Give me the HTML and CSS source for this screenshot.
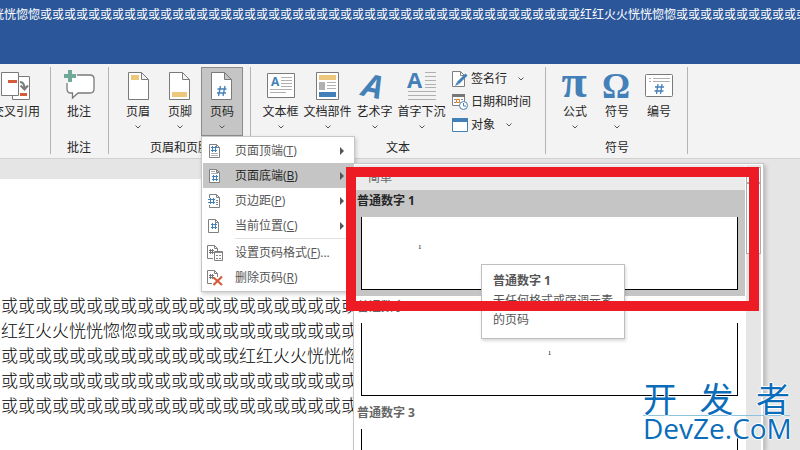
FILE: index.html
```html
<!DOCTYPE html>
<html lang="zh-CN">
<head>
<meta charset="utf-8">
<title>文档</title>
<link rel="stylesheet" href="styles.css">
</head>
<body>
<header class="titlebar"><span class="doc-title">恍恍惚惚或或或或或或或或或或或或或或或或或或或或或或或或或或或或或或或或或或或或或或或或或或或或或红红火火恍恍惚惚或或或或或或或或或或或</span></header>

<nav class="ribbon">
  <section class="group group-ref">
    <div class="tools">
      <button class="tool"><svg class="icon" viewBox="0 0 32 32"><path d="M12.500 6.500h17v23h-17z" fill="#fff" stroke="#7a7a7a"/><path d="M1.500 2.500h17v23h-17z" fill="#fff" stroke="#7a7a7a"/><path d="M8 10h9v3H8zM20 23h7v3h-7z" fill="#d55b3a"/><path d="M20 12c3 0 4.500 2 4.500 7M20.500 15.500l4 4 3.500-4" fill="none" stroke="#7a7a7a" stroke-width="2"/></svg><span>交叉引用</span></button>
    </div>
  </section>

  <section class="group group-comment">
    <div class="tools">
      <button class="tool"><svg class="icon" viewBox="0 0 32 32"><path d="M5 5h22q4 0 4 4v10q0 4-4 4H15l-5.500 5v-5H8q-4 0-4-4V7z" fill="#fff" stroke="#7a7a7a" stroke-width="1.300"/><path d="M1 0h13v13H1z" fill="#f3f3f3"/><path d="M6 8h8v5H6z" fill="#fff"/><path d="M5 0h4v4h4v4H9v4H5V8H1V4h4z" fill="#71a898"/></svg><span>批注</span></button>
    </div>
    <p class="group-name">批注</p>
  </section>

  <section class="group group-hf">
    <div class="tools">
      <button class="tool"><svg class="icon" viewBox="0 0 32 32"><path d="M6.500 2.500h13l7 7v20h-20zM19.500 2.500v7h7" fill="#fff" stroke="#7a7a7a"/><path d="M9 5h8v5H9z" fill="#edc77b"/></svg><span>页眉</span><svg class="chevron" viewBox="0 0 6 4"><path d="M.5.5L3 3 5.500.5" /></svg></button>
      <button class="tool"><svg class="icon" viewBox="0 0 32 32"><path d="M5.500 2.500h13l7 7v20h-20zM18.500 2.500v7h7" fill="#fff" stroke="#7a7a7a"/><path d="M8 22h15v5H8z" fill="#edc77b"/></svg><span>页脚</span><svg class="chevron" viewBox="0 0 6 4"><path d="M.5.5L3 3 5.500.5" /></svg></button>
      <div class="dropdown">
        <button class="tool pressed"><svg class="icon" viewBox="0 0 32 32"><path d="M5.500 2.500h13l7 7v20h-20zM18.500 2.500v7h7" fill="#fff" stroke="#7a7a7a"/><path d="M14.500 16l-2 10M19 16l-2 10M11.500 19h9M11 23h9" fill="none" stroke="#4480b8" stroke-width="1.300"/></svg><span>页码</span><svg class="chevron" viewBox="0 0 6 4"><path d="M.5.5L3 3 5.500.5" /></svg></button>
        <ul class="menu">
          <li><button class="menu-item"><svg class="mini" viewBox="0 0 16 16"><path d="M2.500 1.500h7l3 3v10h-10zM9.500 1.500v3h3" class="sheet"/><path d="M5.500 3v6M8.500 3v6M4 4.500h6M4 7.500h6" class="hash"/><path d="M4 10.500h7M4 12.500h7" class="rule light"/></svg><span>页面顶端(<u>T</u>)</span><i class="arrow"></i></button></li>
          <li class="open"><button class="menu-item"><svg class="mini" viewBox="0 0 16 16"><path d="M2.500 1.500h7l3 3v10h-10zM9.500 1.500v3h3" class="sheet"/><path d="M6.500 7v6M9.500 7v6M5 8.500h6M5 11.500h6" class="hash"/><path d="M4 3.500h4M4 5.500h7" class="rule light"/></svg><span>页面底端(<u>B</u>)</span><i class="arrow"></i></button>
            <div class="gallery">
              <div class="gallery-list">
                <h2 class="gallery-head">简单</h2>
                <button class="style selected"><span class="style-name">普通数字 1</span><span class="preview at-left">1</span></button>
                <button class="style"><span class="style-name">普通数字 2</span><span class="preview at-center">1</span></button>
                <button class="style"><span class="style-name">普通数字 3</span><span class="preview"></span></button>
              </div>
              <div class="scroll"><span class="scroll-up"></span><span class="scroll-thumb"></span></div>
            </div>
          </li>
          <li><button class="menu-item"><svg class="mini" viewBox="0 0 16 16"><path d="M2.500 1.500h7l3 3v10h-10zM9.500 1.500v3h3" class="sheet"/><path d="M1 5h6v7H1z" fill="#fff"/><path d="M3.500 5v6M6.500 5v6M1 6.500h7M1 9.500h7" class="hash"/><path d="M9 7.500h2M9 9.500h2M9 11.500h2" class="rule"/></svg><span>页边距(<u>P</u>)</span><i class="arrow"></i></button></li>
          <li><button class="menu-item"><svg class="mini" viewBox="0 0 16 16"><path d="M1.500 1.500h7l3 3v10h-10zM8.500 1.500v3h3" class="sheet"/><path d="M5.500 5v6M8.500 5v6M4 6.500h6M4 9.500h6" class="hash"/></svg><span>当前位置(<u>C</u>)</span><i class="arrow"></i></button></li>
          <li class="divided"><button class="menu-item"><svg class="mini" viewBox="0 0 16 16"><path d="M6 13.500H.5v-13h7l3 3V6M7.500.5v3h3" class="sheet"/><path d="M3.500 4v5M5.500 4v5M2 5.500h5M2 7.500h5" class="hash dark"/><path d="M7.500 6.500h8v9h-8z" class="sheet"/><path d="M8 7.500h7" class="rule"/><path d="M9 10.500h2M12 10.500h2M9 13.500h2M12 13.500h2" class="rule"/></svg><span>设置页码格式(<u>F</u>)...</span></button></li>
          <li><button class="menu-item"><svg class="mini" viewBox="0 0 16 16"><path d="M5 13.500H.5v-13h7l3 3V7M7.500.5v3h3" class="sheet"/><path d="M3.500 4v5M5.500 4v5M2 5.500h5M2 7.500h5" class="hash dark"/><path d="M6.500 7.500l8.500 7.500M15 6.500L6.500 15" stroke="#d55b3a" stroke-width="2.200"/></svg><span>删除页码(<u>R</u>)</span></button></li>
        </ul>
      </div>
    </div>
    <p class="group-name">页眉和页脚</p>
  </section>

  <section class="group group-text">
    <div class="tools">
      <button class="tool"><svg class="icon" viewBox="0 0 32 32"><path d="M2.500 3.500h27v24h-27z" fill="#fff" stroke="#7a7a7a"/><text x="6" y="16" class="glyph" font-size="12">A</text><path d="M16 7.500h11M16 10.500h11M16 13.500h11M16 16.500h11M5 19.500h22M5 22.500h16" class="rule light"/></svg><span>文本框</span><svg class="chevron" viewBox="0 0 6 4"><path d="M.5.5L3 3 5.500.5" /></svg></button>
      <button class="tool"><svg class="icon" viewBox="0 0 32 32"><path d="M4.500 2.500h22v27h-22z" fill="#fff" stroke="#7a7a7a"/><path d="M7 5h17v5H7z" fill="#edc77b"/><path d="M7 12h6v8H7z" fill="#b0b0b0"/><path d="M15 12.500h9M15 15.500h9M15 18.500h9" class="rule light"/><path d="M7 22h17v5H7z" fill="#4480b8"/></svg><span>文档部件</span><svg class="chevron" viewBox="0 0 6 4"><path d="M.5.5L3 3 5.500.5" /></svg></button>
      <button class="tool"><svg class="icon" viewBox="0 0 32 32"><text x="4" y="28" class="glyph" font-size="32" font-style="italic" transform="rotate(12 16 16)">A</text></svg><span>艺术字</span><svg class="chevron" viewBox="0 0 6 4"><path d="M.5.5L3 3 5.500.5" /></svg></button>
      <button class="tool"><svg class="icon" viewBox="0 0 32 32"><text x="1" y="18" class="glyph" font-size="22">A</text><path d="M19 2.500h11M19 6.500h11M19 10.500h11M19 14.500h11M19 17.500h11M2 21.500h28M2 25.500h28M2 29.500h28" class="rule light"/></svg><span>首字下沉</span><svg class="chevron" viewBox="0 0 6 4"><path d="M.5.5L3 3 5.500.5" /></svg></button>
      <div class="stack">
        <button class="row-tool"><svg class="mini" viewBox="0 0 16 16"><path d="M.5.5h8l4 4v11H.5zM8.500.5v4h4" class="sheet"/><path d="M6 12l8.500-8.500" stroke="#4480b8" stroke-width="3"/><path d="M3 15l2-4 2 2z" fill="#4480b8"/></svg><span>签名行</span><svg class="chevron" viewBox="0 0 6 4"><path d="M.5.5L3 3 5.500.5" /></svg></button>
        <button class="row-tool"><svg class="mini" viewBox="0 0 16 16"><path d="M.5.5h12v11H.5z" class="sheet"/><path d="M0 0h13v3H0z" fill="#777"/><path d="M2 5.500h2M2 8.500h2M9 5.500h2" class="rule"/><path d="M4.500 5.500h3v3h-3z" fill="#fff" stroke="#e07b2a"/><circle cx="11.500" cy="11.500" r="4" fill="#fff" stroke="#4480b8"/><path d="M11.500 9v3h2.500" fill="none" stroke="#4480b8"/></svg><span>日期和时间</span></button>
        <button class="row-tool"><svg class="mini" viewBox="0 0 16 16"><path d="M.5 1.500h15v13H.5z" fill="#fff" stroke="#4480b8"/><path d="M0 1h16v4H0z" fill="#4480b8"/></svg><span>对象</span><svg class="chevron" viewBox="0 0 6 4"><path d="M.5.5L3 3 5.500.5" /></svg></button>
      </div>
    </div>
    <p class="group-name">文本</p>
  </section>

  <section class="group group-symbol">
    <div class="tools">
      <button class="tool"><svg class="icon" viewBox="0 0 32 32"><text x="15" y="27" class="serif" font-size="46" text-anchor="middle">π</text></svg><span>公式</span><svg class="chevron" viewBox="0 0 6 4"><path d="M.5.5L3 3 5.500.5" /></svg></button>
      <button class="tool"><svg class="icon" viewBox="0 0 32 32"><text x="15" y="28" class="serif" font-size="35" text-anchor="middle">Ω</text></svg><span>符号</span><svg class="chevron" viewBox="0 0 6 4"><path d="M.5.5L3 3 5.500.5" /></svg></button>
      <button class="tool"><svg class="icon" viewBox="0 0 32 32"><rect x="2.500" y="4.500" width="27" height="22" rx="1" fill="#fff" stroke="#7a7a7a"/><path d="M6 8.500h2M10 8.500h17M6 11.500h2M10 11.500h17" class="rule light"/><path d="M15 14l-1.500 10M19 14l-1.500 10M12 17h9M11.500 21h9" fill="none" stroke="#4480b8" stroke-width="1.300"/></svg><span>编号</span></button>
    </div>
    <p class="group-name">符号</p>
  </section>
</nav>

<main class="workspace">
  <article class="page">
    <p>或或或或或或或或或或或或或或或或或或或或或或</p>
    <p>红红火火恍恍惚惚或或或或或或或或或或或或或或</p>
    <p>或或或或或或或或或或或或或或红红火火恍恍惚惚</p>
    <p>或或或或或或或或或或或或或或或或或或或或或或</p>
    <p>或或或或或或或或或或或或或或或或或或或或或或</p>
  </article>
</main>

<aside class="tooltip" role="tooltip"><strong>普通数字 1</strong><p>无任何格式或强调元素的页码</p></aside>
<div class="highlight"></div>
<div class="watermark"><div class="mark-cn"><span>开</span><span>发</span><span>者</span></div><div class="mark-en">DevZe.CoM</div></div>
</body>
</html>
```

FILE: styles.css
```css
* { box-sizing: border-box; }

body {
  margin: 0;
  height: 100vh;
  overflow: hidden;
  position: relative;
  display: flex;
  flex-direction: column;
  background: #e5e5e5;
  color: #262626;
  font: 12px/16px "Open Sans", "Noto Sans CJK SC", sans-serif;
}

p, h2, ul { margin: 0; padding: 0; list-style: none; }

button {
  margin: 0;
  padding: 0;
  border: 0;
  background: none;
  color: inherit;
  font: inherit;
  white-space: nowrap;
}

svg { display: block; flex: none; overflow: visible; }

.titlebar {
  flex: none;
  height: 64px;
  padding-top: 7px;
  overflow: hidden;
  background: #2b579a;
  color: #fff;
}

.doc-title { display: block; margin-left: -8px; white-space: nowrap; }

/* Ribbon */
.ribbon {
  flex: none;
  display: flex;
  height: 95px;
  padding-top: 3px;
  background: #f3f3f3;
  border-bottom: 1px solid #d2d2d2;
}

.group {
  flex: none;
  height: 87px;
  border-right: 1px solid #b4b4b4;
}

.group-ref { margin-left: -8px; padding-right: 10px; }
.group-comment { padding: 0 8px 0 7px; }
.group-hf { padding: 0 7px 0 8px; }
.group-text .tools { padding: 0 14px 0 6px; }
.group-symbol { padding: 0 7px 0 8px; }

.tools { display: flex; height: 69px; }
.group-name { margin-top: 4px; text-align: center; }

.tool {
  display: flex;
  flex-direction: column;
  align-items: center;
  width: 42px;
  height: 69px;
  padding-top: 3px;
  line-height: 20px;
}

.group-ref .tool { width: 48px; }
.group-text .tool { width: 47px; }
.tool.pressed { background: #c5c5c5; outline: 1px solid #8c8c8c; outline-offset: -1px; }

.icon { width: 32px; height: 32px; }
.mini { width: 16px; height: 16px; }
.chevron { width: 6px; height: 4px; fill: none; stroke: #555; }
.tool .chevron { margin-top: 3px; }

.glyph { font-family: "Open Sans", sans-serif; font-weight: 700; fill: #4480b8; }
.serif { font-family: "Liberation Serif", serif; font-weight: 700; fill: #4480b8; }
.sheet { fill: #fff; stroke: #808080; }
.hash { fill: none; stroke: #4480b8; }
.hash.dark { stroke: #777; }
.rule { fill: none; stroke: #888; }
.rule.light { stroke: #b0b0b0; }

.stack { display: flex; flex-direction: column; margin-left: 7px; }
.row-tool { display: flex; align-items: center; gap: 3px; height: 23px; }
.row-tool .chevron { margin-left: 8px; }

/* Page-number menu */
.dropdown { position: relative; z-index: 2; }

.menu {
  position: absolute;
  top: 100%;
  left: 0;
  width: 154px;
  padding: 1px;
  background: #fff;
  border: 1px solid #c6c6c6;
  box-shadow: 1px 2px 4px rgba(0, 0, 0, .2);
  color: #555;
}

.menu li { position: relative; }

.menu-item {
  display: flex;
  align-items: center;
  width: 100%;
  height: 25px;
  padding: 0 9px 0 4px;
  text-align: left;
}

.menu-item span { flex: 1; margin-left: 12px; }
.menu .open { background: #c5c5c5; color: #262626; }
.menu .divided { padding-top: 2px; }

.divided::before {
  content: "";
  position: absolute;
  top: 0;
  left: 32px;
  right: 0;
  border-top: 1px solid #e1e1e1;
}

.arrow {
  border: 4px solid transparent;
  border-left-color: #555;
  border-right-width: 0;
}

/* Style gallery */
.gallery {
  position: absolute;
  top: 0;
  left: 100%;
  display: flex;
  width: 411px;
  height: calc(100vh - 163px);
  padding: 1px 2px 0 1px;
  overflow: hidden;
  background: #fff;
  border: 1px solid #c6c6c6;
  border-bottom: 0;
  box-shadow: 2px 2px 4px rgba(0, 0, 0, .2);
  color: #666;
}

.gallery-list { flex: 1; }

.gallery-head {
  height: 25px;
  padding-left: 13px;
  background: #ebebeb;
  font-size: 12px;
  font-weight: 400;
  line-height: 25px;
}

.style { display: block; width: 100%; height: 106px; text-align: left; }
.style.selected { background: #c5c5c5; color: #262626; }

.style-name {
  display: block;
  padding-left: 2px;
  font-weight: 700;
  line-height: 22px;
}

.preview {
  display: block;
  height: 73px;
  margin: 5px 7px 6px 6px;
  padding-top: 22px;
  background: #fff;
  border: solid #000;
  border-width: 0 1px 1px;
  color: #000;
  font: 7px/16px "Liberation Serif", serif;
}

.at-left { padding-left: 56px; }
.at-center { text-align: center; }

.scroll { width: 15px; margin-left: 1px; background: #e6e6e6; }
.scroll span { display: block; background: #fff; border: 1px solid #ababab; }
.scroll-up { height: 16px; margin-top: 2px; }
.scroll-thumb { height: 71px; }

/* Document */
.workspace { flex: 1; min-height: 0; padding: 20px 60px 0 0; }

.page {
  height: 100%;
  padding: 114px 0 0 1px;
  background: #fff;
  color: #000;
  font-size: 17px;
  font-weight: 300;
  line-height: 25px;
  white-space: nowrap;
  overflow: hidden;
}

/* Overlays */
.tooltip {
  position: absolute;
  top: 264px;
  left: 481px;
  z-index: 3;
  width: 144px;
  padding: 6px 11px 9px;
  background: #fff;
  border: 1px solid #bebebe;
  box-shadow: 1px 2px 3px rgba(0, 0, 0, .15);
  color: #555;
  line-height: 19px;
}

.tooltip strong { display: block; margin-bottom: 1px; }

.highlight {
  position: absolute;
  top: 167px;
  left: 346px;
  z-index: 4;
  width: 413px;
  height: 144px;
  border: 10px solid #ed1c24;
}

.watermark {
  position: absolute;
  right: 10px;
  bottom: 9px;
  z-index: 5;
  width: 147px;
  color: #0b6cba;
  text-shadow: 1px 0 #fff, -1px 0 #fff, 0 1px #fff, 0 -1px #fff;
}

.mark-cn {
  display: flex;
  justify-content: space-between;
  border-bottom: 1px solid #8cc4e0;
  font-size: 34px;
  line-height: 32px;
}

.mark-en { font-size: 28px; line-height: 25px; white-space: nowrap; }
```
